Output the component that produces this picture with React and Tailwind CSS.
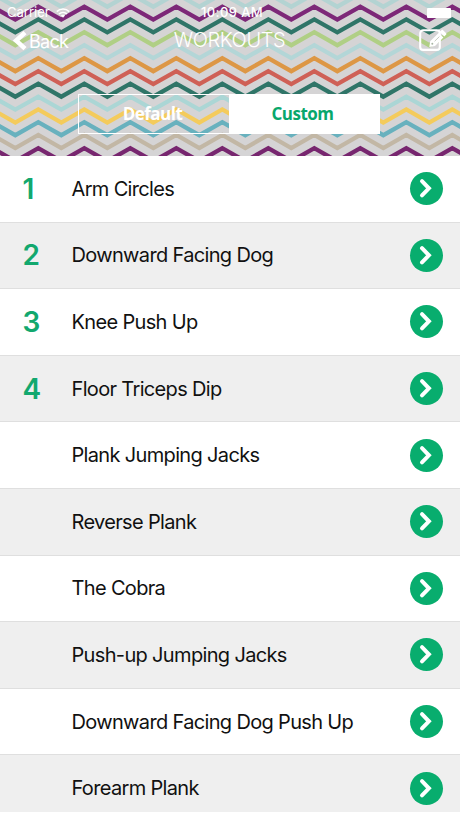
import React, { useState } from "react";

const WORKOUTS = [
  { name: "Arm Circles", order: 1 },
  { name: "Downward Facing Dog", order: 2 },
  { name: "Knee Push Up", order: 3 },
  { name: "Floor Triceps Dip", order: 4 },
  { name: "Plank Jumping Jacks" },
  { name: "Reverse Plank" },
  { name: "The Cobra" },
  { name: "Push-up Jumping Jacks" },
  { name: "Downward Facing Dog Push Up" },
  { name: "Forearm Plank" },
];

const STRIPES = [
  { y: -6.3, color: "#b3d3d2" },
  { y: 6.6, color: "#7d2878" },
  { y: 19.4, color: "#2f7568" },
  { y: 32.2, color: "#b0cf85" },
  { y: 45.1, color: "#b3d6d7" },
  { y: 58.2, color: "#dd9745" },
  { y: 71.1, color: "#cf6056" },
  { y: 83.7, color: "#2f7568" },
  { y: 96.6, color: "#abd6d5" },
  { y: 109.5, color: "#f4cb5c" },
  { y: 122.2, color: "#68b1be" },
  { y: 135, color: "#c2b7a5" },
  { y: 148.2, color: "#77266f" },
];

// zigzag across the header, 46px from peak to peak
const zigzag = (y) => {
  const points = [];
  for (let i = 0; i < 23; i++) {
    points.push(`${-7.7 + i * 23},${i % 2 === 0 ? y : y + 13}`);
  }
  return points.join(" ");
};

const Chevrons = () => (
  <svg
    className="absolute inset-0"
    width="460"
    height="156"
    viewBox="0 0 460 156"
    fill="none"
  >
    {STRIPES.map((stripe) => (
      <polyline
        key={stripe.y}
        points={zigzag(stripe.y)}
        stroke={stripe.color}
        strokeWidth="4.3"
      />
    ))}
  </svg>
);

const WifiIcon = () => (
  <svg width="14" height="10" viewBox="0 0 14 10" fill="none" stroke="white" strokeWidth="1.6">
    <path d="M0.8 3.6 C4.3 0.2 9.7 0.2 13.2 3.6" />
    <path d="M3 6 C5.3 3.9 8.7 3.9 11 6" />
    <path d="M7 9.8 L4.9 7.6 C6.1 6.6 7.9 6.6 9.1 7.6 Z" fill="white" stroke="none" />
  </svg>
);

const EditIcon = () => (
  <svg width="28" height="24" viewBox="0 0 28 24" fill="none">
    <rect x="1.2" y="2.3" width="19.6" height="19.6" rx="3" stroke="white" strokeWidth="2.1" />
    <path
      d="M10.3 18.9 L11.2 13.2 L19.6 4.9 L24.4 9.6 L16 18 Z M20.6 3.9 L22.6 1.9 Q23.2 1.3 23.9 1.9 L27.2 5.2 Q27.8 5.9 27.2 6.6 L25.3 8.6 Z"
      fill="white"
    />
    <path d="M15.6 13.3 L20.4 8.6" stroke="#bfc5b8" strokeWidth="0.9" />
    <circle cx="13.3" cy="15.8" r="1" fill="#a9b7a4" />
  </svg>
);

const ArrowButton = () => (
  <button className="flex h-[33px] w-[33px] shrink-0 items-center justify-center rounded-full bg-[#08ad6e]">
    <svg width="33" height="33" viewBox="0 0 33 33" fill="none">
      <path
        d="M12 9.2 L18.9 16.3 L12 23.4"
        stroke="white"
        strokeWidth="4"
        strokeLinecap="round"
      />
    </svg>
  </button>
);

const App = () => {
  const [tab, setTab] = useState("Custom");

  return (
    <div className="h-[818px] w-[460px] overflow-hidden bg-white font-['Inter',sans-serif]">
      <header className="relative h-[156px] overflow-hidden bg-[#d5d4d5] text-white">
        <Chevrons />
        <div className="relative grid h-6 grid-cols-[150px_1fr_150px] items-center pt-px pr-[9px] pl-[7px] text-[13px]">
          <div className="flex items-center gap-[6px]">
            <span className="tracking-[0px]">Carrier</span>
            <WifiIcon />
          </div>
          <span className="pl-[6px] text-center font-medium tracking-[0.4px]">10:09 AM</span>
          <span className="h-[10px] w-6 justify-self-end rounded-[1px] bg-white" />
        </div>
        <nav className="relative grid h-8 grid-cols-3 items-center pr-[13px] pl-3">
          <button className="flex items-center gap-[2px] pt-[2px]">
            <svg width="15" height="22" viewBox="0 0 15 22" fill="none">
              <path d="M13 2.6 L4.2 10.6 L13 18.6" stroke="white" strokeWidth="4.6" />
            </svg>
            <span className="text-[18px] tracking-[-0.7px]">Back</span>
          </button>
          <h1 className="pb-px text-center text-[20px] font-light tracking-[-0.4px]">
            WORKOUTS
          </h1>
          <button className="justify-self-end">
            <EditIcon />
          </button>
        </nav>
        <div className="relative mt-[38px] ml-[78px] flex h-10 w-[302px] border-[1.5px] border-white">
          {["Default", "Custom"].map((label) => (
            <button
              key={label}
              onClick={() => setTab(label)}
              className={`flex-1 pr-[3px] pb-px font-['Open_Sans',sans-serif] text-[17px] font-bold tracking-[-0.5px] ${
                tab === label ? "bg-white text-[#08a76b]" : "text-white"
              }`}
            >
              {label}
            </button>
          ))}
        </div>
      </header>
      <ul className="h-[656px] overflow-hidden">
        {WORKOUTS.map((workout) => (
          <li
            key={workout.name}
            className="flex h-[66.6px] items-center border-b border-[#dfdfdf] pr-[17px] pl-[22.5px] even:bg-[#efefef]"
          >
            <span className="w-[49px] text-[28px] font-semibold text-[#12a86e]">
              {workout.order}
            </span>
            <span className="flex-1 text-[20px] tracking-[-0.66px] whitespace-nowrap text-[#111]">
              {workout.name}
            </span>
            <ArrowButton />
          </li>
        ))}
      </ul>
    </div>
  );
};

export default App;
